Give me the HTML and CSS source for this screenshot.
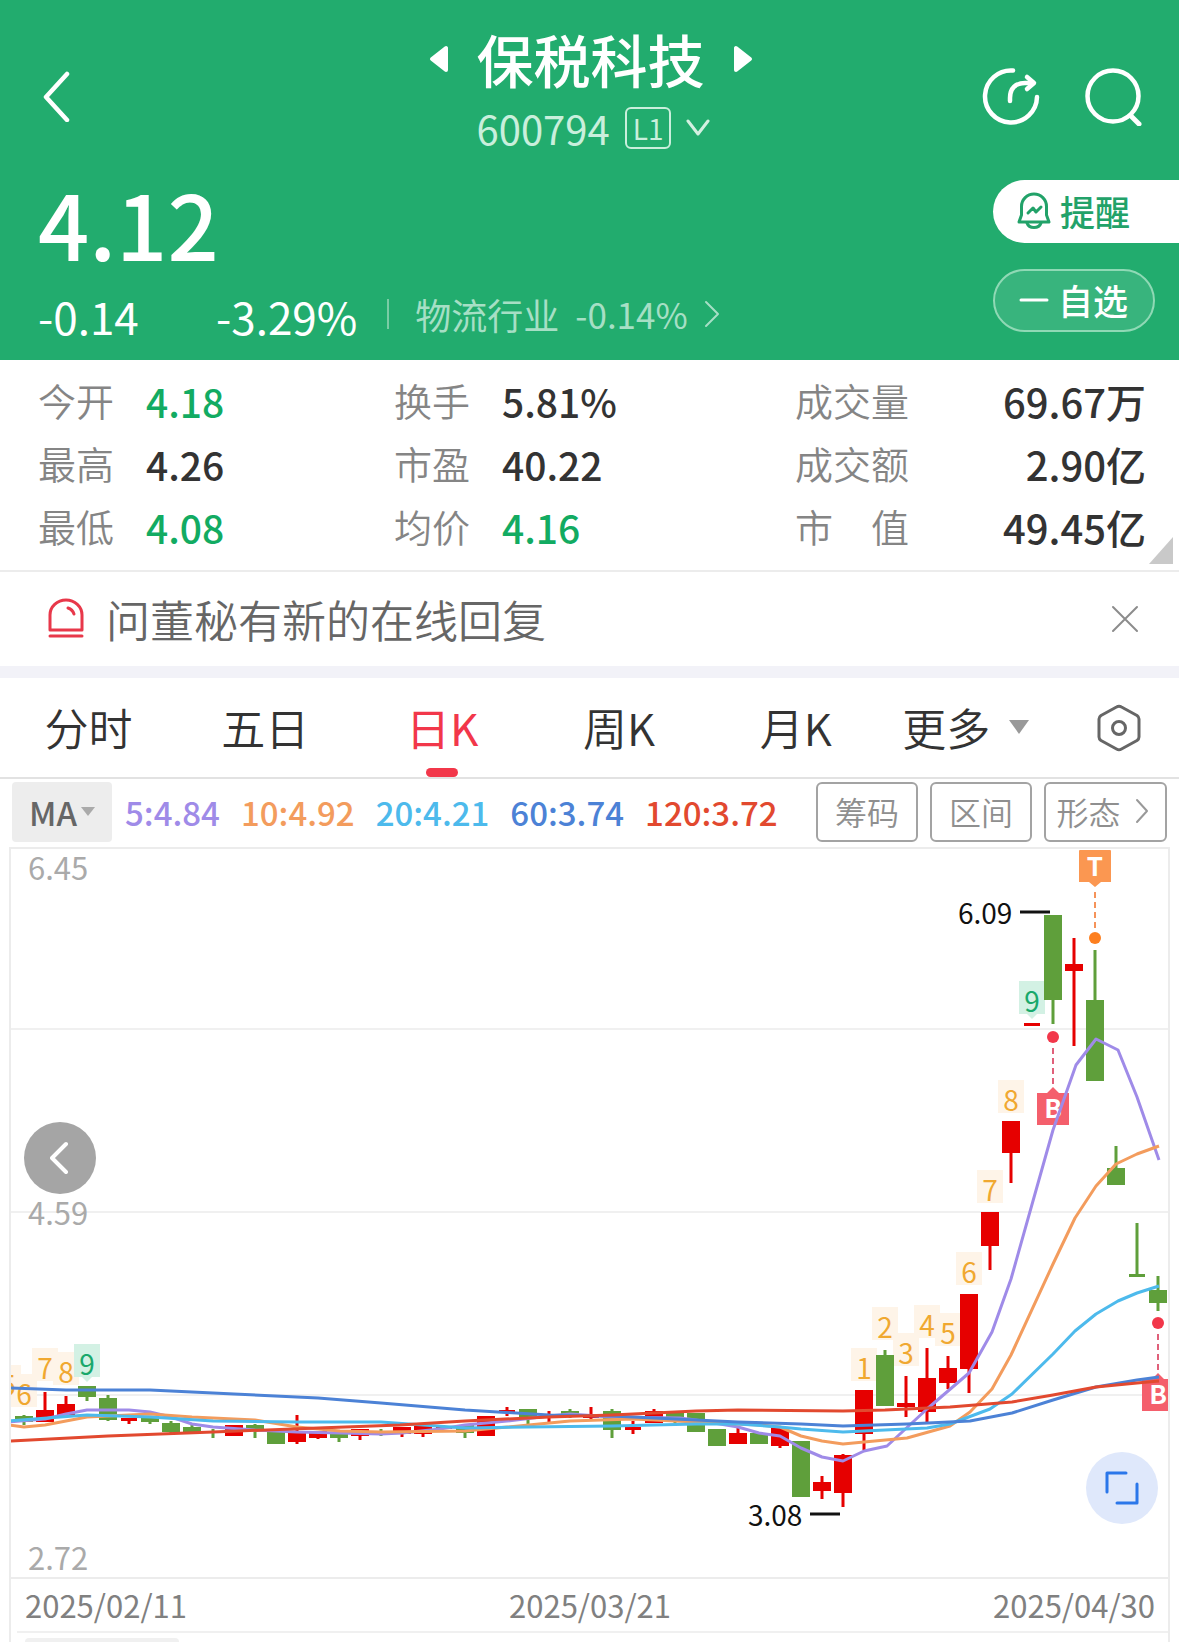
FILE: index.html
```html
<!DOCTYPE html>
<html lang="zh-CN">
<head>
  <meta charset="UTF-8">
  <meta name="viewport" content="width=device-width, initial-scale=1">
  <title>保税科技 600794</title>
  <link rel="stylesheet" href="styles.css">
</head>
<body>
  <header class="quote-header">
    <div class="top-bar">
      <button class="icon-btn back-btn" aria-label="返回">
        <svg width="30" height="52" viewBox="0 0 30 52"><path d="M25 4 4 27 25 50" fill="none" stroke="#fff" stroke-width="4.500" stroke-linecap="round" stroke-linejoin="round"/></svg>
      </button>
      <div class="stock">
        <div class="stock-name">
          <button class="icon-btn" aria-label="上一只">
            <svg width="20" height="28" viewBox="0 0 20 28"><path d="M17 4v22L3 15z" fill="#fff" stroke="#fff" stroke-width="4" stroke-linejoin="round"/></svg>
          </button>
          <h1>保税科技</h1>
          <button class="icon-btn" aria-label="下一只">
            <svg width="20" height="28" viewBox="0 0 20 28"><path d="M3 4v22l14-11z" fill="#fff" stroke="#fff" stroke-width="4" stroke-linejoin="round"/></svg>
          </button>
        </div>
        <div class="stock-code">
          <span>600794</span>
          <span class="level">L1</span>
          <svg width="24" height="18" viewBox="0 0 24 18"><path d="m2 2 10 13L22 2" fill="none" stroke="#d3f0e1" stroke-width="3" stroke-linecap="round" stroke-linejoin="round"/></svg>
        </div>
      </div>
      <div class="top-actions">
        <button class="icon-btn" aria-label="分享">
          <svg width="58" height="60" viewBox="0 0 58 60"><g fill="none" stroke="#fff" stroke-width="4.500" stroke-linecap="round" stroke-linejoin="round"><path d="M31 4.500A26 26 0 1 0 55 31"/><path d="M28 35v-3c0-10 6-15 15-15h7"/><path d="m45 11 7 6-7 6"/></g></svg>
        </button>
        <button class="icon-btn" aria-label="搜索">
          <svg width="58" height="60" viewBox="0 0 58 60"><g fill="none" stroke="#fff" stroke-width="4.500" stroke-linecap="round"><circle cx="28" cy="30" r="25.500"/><path d="m46 50 8 8" stroke-width="5"/></g></svg>
        </button>
      </div>
    </div>

    <div class="quote">
      <div class="quote-main">
        <div class="price">4.12</div>
        <div class="change">
          <span class="change-value">-0.14</span>
          <span>-3.29%</span>
          <a class="sector" href="#sector">
            物流行业
            <span>-0.14%</span>
            <svg width="16" height="28" viewBox="0 0 16 28"><path d="m2 2 12 12L2 26" fill="none" stroke="#a6dfc5" stroke-width="2" stroke-linecap="round" stroke-linejoin="round"/></svg>
          </a>
        </div>
      </div>
      <div class="quote-actions">
        <button class="pill pill-alert">
          <svg width="34" height="38" viewBox="0 0 34 38"><g fill="none" stroke="#22a269" stroke-width="3" stroke-linecap="round" stroke-linejoin="round"><path d="M4.500 23V14.500a12.500 12.500 0 0 1 25 0V23l2.500 7H2z"/><path d="M10 31c2 6 12 6 14 0"/><path d="m11 21 5-5 3 4 5-5"/></g></svg>
          提醒
        </button>
        <button class="pill pill-watch">
          <svg width="30" height="36" viewBox="0 0 30 36"><path d="M2 18h26" stroke="#fff" stroke-width="3" stroke-linecap="round"/></svg>
          自选
        </button>
      </div>
    </div>
  </header>

  <main>
    <section class="stats">
      <dl>
        <div><dt>今开</dt><dd class="down">4.18</dd></div>
        <div><dt>最高</dt><dd>4.26</dd></div>
        <div><dt>最低</dt><dd class="down">4.08</dd></div>
        <div><dt>换手</dt><dd>5.81%</dd></div>
        <div><dt>市盈</dt><dd>40.22</dd></div>
        <div><dt>均价</dt><dd class="down">4.16</dd></div>
        <div class="wide"><dt>成交量</dt><dd>69.67万</dd></div>
        <div class="wide"><dt>成交额</dt><dd>2.90亿</dd></div>
        <div class="wide"><dt>市　值</dt><dd>49.45亿</dd></div>
      </dl>
      <svg class="corner" width="24" height="27" viewBox="0 0 24 27"><path d="M24 0v27H0z" fill="#c9c9c9"/></svg>
    </section>

    <section class="notice">
      <svg width="36" height="42" viewBox="0 0 36 42"><g fill="none" stroke="#e8384a" stroke-width="3" stroke-linecap="round" stroke-linejoin="round"><path d="M2 32V17a16 15 0 0 1 32 0v15z"/><path d="M2 38h32"/><path d="M20 10c3 1 5 3 6 6"/></g></svg>
      <a href="#replies">问董秘有新的在线回复</a>
      <button class="icon-btn" aria-label="关闭">
        <svg width="28" height="28" viewBox="0 0 28 28"><path d="m2 2 24 24M26 2 2 26" stroke="#8c8c8c" stroke-width="2" stroke-linecap="round"/></svg>
      </button>
    </section>

    <nav class="tabs">
      <button class="tab">分时</button>
      <button class="tab">五日</button>
      <button class="tab active">日K</button>
      <button class="tab">周K</button>
      <button class="tab">月K</button>
      <button class="tab-more">
        更多
        <svg width="22" height="16" viewBox="0 0 22 16"><path d="M1 1h20L11 15z" fill="#999"/></svg>
      </button>
      <button class="icon-btn tab-settings" aria-label="设置">
        <svg width="44" height="48" viewBox="0 0 44 48"><g fill="none" stroke="#666" stroke-width="3" stroke-linejoin="round"><path d="M19.500 3 4 11.500Q2 13 2 15v18q0 2 2 3.500L19.500 45q2.500 1.500 5 0L40 36.500q2-1.500 2-3.500V15q0-2-2-3.500L24.500 3q-2.500-1.500-5 0z"/><circle cx="22" cy="24" r="6.500"/></g></svg>
      </button>
    </nav>

    <div class="indicator-bar">
      <button class="indicator">
        MA
        <svg width="14" height="10" viewBox="0 0 14 10"><path d="M0 0h14L7 9z" fill="#aaa"/></svg>
      </button>
      <div class="ma-values">
        <span class="ma5">5:4.84</span>
        <span class="ma10">10:4.92</span>
        <span class="ma20">20:4.21</span>
        <span class="ma60">60:3.74</span>
        <span class="ma120">120:3.72</span>
      </div>
      <div class="tools">
        <button class="tool">筹码</button>
        <button class="tool">区间</button>
        <button class="tool tool-shape">
          形态
          <svg width="14" height="26" viewBox="0 0 14 26"><path d="m2 2 10 11L2 24" fill="none" stroke="#999" stroke-width="2" stroke-linecap="round" stroke-linejoin="round"/></svg>
        </button>
      </div>
    </div>

    <section class="chart">
      <div class="plot">
        <svg id="kline" viewBox="11 849 1157 728" role="img" aria-label="日K线图"></svg>
        <button class="float-btn prev-btn" aria-label="向左">
          <svg width="20" height="34" viewBox="0 0 20 34"><path d="M16 3 2 17l14 14" fill="none" stroke="#fff" stroke-width="4" stroke-linecap="round" stroke-linejoin="round"/></svg>
        </button>
        <button class="float-btn expand-btn" aria-label="全屏">
          <svg width="34" height="34" viewBox="0 0 34 34"><path d="M21 2H2v19M12 32h20V13" fill="none" stroke="#2b77ea" stroke-width="3" stroke-linecap="round" stroke-linejoin="round"/></svg>
        </button>
      </div>
      <div class="dates">
        <span>2025/02/11</span>
        <span>2025/03/21</span>
        <span>2025/04/30</span>
      </div>
      <div class="volume"><div class="volume-tag"></div></div>
    </section>
  </main>

  <script>
    const SVG_NS = 'http://www.w3.org/2000/svg';
    const kline = document.getElementById('kline');
    const START = 24, STEP = 21, BODY = 18;

    // direction, high, body top, body bottom, low
    const candles = [
      ['d', 1415, 1416, 1422, 1425], ['u', 1392, 1410, 1422, 1422], ['u', 1396, 1404, 1415, 1415],
      ['d', 1386, 1386, 1397, 1401], ['d', 1395, 1398, 1420, 1421], ['u', 1418, 1418, 1421, 1424],
      ['d', 1416, 1416, 1422, 1424], ['d', 1421, 1423, 1432, 1433], ['d', 1425, 1427, 1432, 1433],
      ['d', 1429, 1431, 1433, 1438], ['u', 1425, 1425, 1436, 1436], ['d', 1424, 1425, 1430, 1438],
      ['d', 1432, 1432, 1444, 1444], ['u', 1415, 1432, 1442, 1444], ['u', 1431, 1431, 1438, 1439],
      ['d', 1434, 1434, 1438, 1442], ['u', 1429, 1429, 1436, 1440], ['d', 1429, 1433, 1435, 1436],
      ['u', 1427, 1427, 1434, 1437], ['u', 1426, 1426, 1434, 1437], ['u', 1426, 1426, 1429, 1429],
      ['d', 1424, 1425, 1433, 1438], ['u', 1416, 1416, 1436, 1436], ['u', 1407, 1410, 1413, 1416],
      ['d', 1409, 1409, 1417, 1424], ['u', 1411, 1414, 1417, 1422], ['d', 1409, 1411, 1416, 1418],
      ['u', 1407, 1415, 1418, 1419], ['d', 1409, 1411, 1430, 1438], ['u', 1421, 1427, 1430, 1434],
      ['u', 1409, 1411, 1423, 1423], ['d', 1413, 1413, 1417, 1423], ['d', 1413, 1413, 1432, 1432],
      ['d', 1429, 1429, 1446, 1446], ['u', 1428, 1433, 1444, 1444], ['d', 1433, 1433, 1444, 1444],
      ['u', 1427, 1427, 1446, 1448], ['d', 1441, 1441, 1497, 1497], ['u', 1476, 1482, 1491, 1499],
      ['u', 1454, 1455, 1493, 1507], ['u', 1390, 1390, 1434, 1450], ['d', 1350, 1355, 1406, 1406],
      ['u', 1376, 1403, 1407, 1417], ['u', 1348, 1378, 1412, 1422], ['u', 1356, 1368, 1383, 1389],
      ['u', 1294, 1294, 1369, 1393], ['u', 1212, 1212, 1246, 1270], ['u', 1121, 1121, 1153, 1183],
      ['u', 1023, 1023, 1026, 1026], ['d', 915, 915, 1000, 1024], ['u', 938, 964, 971, 1046],
      ['d', 950, 1000, 1081, 1081], ['d', 1146, 1168, 1185, 1185], ['d', 1223, 1274, 1277, 1277],
      ['d', 1276, 1290, 1303, 1311]
    ];

    const averages = {
      ma5: '9,1422 45,1419 66,1414 87,1410 129,1410 150,1412 171,1417 192,1424 213,1427 255,1430 297,1432 340,1433 381,1434 402,1433 440,1429 465,1425 507,1421 549,1416 570,1414 612,1417 680,1418 696,1420 738,1427 759,1433 780,1436 801,1448 822,1457 843,1461 864,1451 887,1446 927,1409 969,1373 992,1332 1011,1279 1053,1130 1076,1065 1096,1039 1118,1050 1137,1097 1159,1160',
      ma10: '9,1425 24,1427 45,1425 87,1417 150,1414 192,1417 255,1420 297,1427 340,1431 381,1432 465,1431 507,1427 570,1421 633,1419 696,1422 759,1425 780,1427 801,1436 822,1441 843,1444 864,1442 907,1438 950,1426 970,1412 992,1389 1011,1355 1053,1264 1075,1218 1096,1186 1116,1164 1137,1154 1159,1146',
      ma20: '9,1421 87,1415 150,1417 213,1421 297,1422 381,1422 465,1428 528,1427 612,1426 696,1424 738,1424 780,1427 801,1429 843,1432 885,1430 927,1428 950,1424 990,1409 1012,1394 1053,1354 1075,1331 1096,1314 1118,1301 1137,1293 1159,1286',
      ma60: '9,1388 66,1390 150,1390 234,1394 318,1398 381,1403 465,1410 549,1415 612,1416 696,1420 738,1422 801,1424 843,1426 907,1424 970,1421 1012,1413 1053,1400 1096,1387 1137,1380 1159,1377',
      ma120: '9,1441 108,1436 213,1432 318,1428 400,1425 465,1421 549,1417 612,1415 696,1411 738,1410 843,1411 885,1410 950,1407 1012,1402 1053,1395 1096,1387 1137,1383 1159,1381'
    };

    // count label, x, baseline
    const counts = [
      ['5', 8, 1396], ['6', 24, 1405], ['7', 45, 1379], ['8', 66, 1383], ['9', 87, 1375],
      ['1', 864, 1379], ['2', 885, 1338], ['3', 906, 1364], ['4', 927, 1336], ['5', 948, 1344],
      ['6', 969, 1283], ['7', 990, 1201], ['8', 1011, 1111], ['9', 1032, 1012]
    ];

    function add(tag, attrs, text) {
      const el = document.createElementNS(SVG_NS, tag);
      for (const key in attrs) el.setAttribute(key, attrs[key]);
      if (text) el.textContent = text;
      kline.appendChild(el);
    }

    // --- Grid ---
    [1029, 1212, 1395].forEach(y => add('path', { d: `M9 ${y}h1160`, class: 'grid-line' }));
    add('text', { x: 28, y: 880, class: 'axis' }, '6.45');
    add('text', { x: 28, y: 1225, class: 'axis' }, '4.59');
    add('text', { x: 28, y: 1570, class: 'axis' }, '2.72');

    // --- Count labels ---
    counts.forEach(([n, x, y]) => {
      const cls = n === '9' ? 'nine-bg' : 'count-bg';
      add('rect', { x: x - 13, y: y - 31, width: 26, height: 33, class: cls });
      if (n === '9') add('path', { d: `M${x - 5} ${y + 2}h10l-5 5z`, class: cls });
    });
    counts.forEach(([n, x, y]) => {
      add('text', { x: x, y: y, class: n === '9' ? 'count nine' : 'count' }, n);
    });

    // --- Candles ---
    candles.forEach(([dir, high, top, bottom, low], i) => {
      const x = START + STEP * i;
      const w = bottom - top < 4 ? 16 : BODY;
      add('rect', { x: x - 1.5, y: high, width: 3, height: low - high, class: dir });
      add('rect', { x: x - w / 2, y: top, width: w, height: bottom - top, class: dir });
    });

    // --- High / low marks ---
    add('text', { x: 958, y: 924, class: 'extreme' }, '6.09');
    add('path', { d: 'M1020 912h30', class: 'extreme-line' });
    add('text', { x: 748, y: 1526, class: 'extreme' }, '3.08');
    add('path', { d: 'M810 1514h30', class: 'extreme-line' });

    // --- Trade marks ---
    add('path', { d: 'M1095 892v38', class: 'dash t-mark' });
    add('circle', { cx: 1095, cy: 938, r: 6, class: 't-dot' });
    add('path', { d: 'M1080 850h30a1 1 0 0 1 1 1v31h-10l-6 5-6-5h-10v-31a1 1 0 0 1 1-1z', class: 't-box' });
    add('text', { x: 1095, y: 876, class: 'mark' }, 'T');
    [[1053, 1037], [1158, 1323]].forEach(([x, y]) => {
      add('circle', { cx: x, cy: y, r: 6, class: 'b-dot' });
      add('path', { d: `M${x} ${y + 11}v38`, class: 'dash b-mark' });
      add('path', { d: `M${x - 16} ${y + 56}h10l6-6 6 6h10v32h-32z`, class: 'b-box' });
      add('text', { x: x, y: y + 81, class: 'mark' }, 'B');
    });

    // --- Moving averages ---
    ['ma5', 'ma10', 'ma20', 'ma60', 'ma120'].forEach(name => {
      add('polyline', { points: averages[name], class: 'ma-line ' + name });
    });
  </script>
</body>
</html>
```

FILE: styles.css
```css
:root {
  --green: #22ac6e;
  --down: #12ab62;
  --red: #f2374a;
  --text: #333;
  --muted: #858585;
  --line: #ececec;
}
/* Reset & Base Styles */
* { margin: 0; padding: 0; box-sizing: border-box; }
body {
  background: #fff;
  color: var(--text);
  font-family: "Noto Sans CJK SC", "Noto Sans", sans-serif;
  font-size: 33px;
}
button {
  border: none;
  background: none;
  color: inherit;
  font: inherit;
  cursor: pointer;
}
a { color: inherit; text-decoration: none; }
svg { display: block; flex: none; }
.icon-btn { display: flex; align-items: center; }

/* Header */
.quote-header {
  background: var(--green);
  color: #fff;
  padding: 26px 0 6px;
}
.top-bar {
  display: grid;
  grid-template-columns: 1fr auto 1fr;
  align-items: center;
  padding: 0 36px 0 38px;
}
.back-btn { padding-left: 4px; }
.stock-name {
  display: flex;
  align-items: center;
  justify-content: center;
  gap: 28px;
  line-height: 64px;
}
.stock-name h1 {
  font-size: 57px;
  font-weight: 500;
}
.stock-code {
  display: flex;
  align-items: center;
  justify-content: center;
  gap: 15px;
  padding-left: 6px;
  line-height: 76px;
  font-size: 40px;
  color: #c9efdc;
}
.level {
  border: 2px solid #c9efdc;
  border-radius: 6px;
  padding: 0 6px;
  font-size: 28px;
  line-height: 38px;
}
.top-actions {
  display: flex;
  justify-content: flex-end;
  gap: 45px;
}

.quote {
  display: flex;
  justify-content: space-between;
}
.quote-main { padding-left: 38px; }
.price {
  font-size: 90px;
  font-weight: 500;
  line-height: 112px;
}
.change {
  display: flex;
  align-items: flex-start;
  font-size: 44px;
  line-height: 76px;
}
.change-value { width: 178px; }
.sector {
  display: flex;
  align-items: center;
  gap: 16px;
  margin-left: 30px;
  font-size: 36px;
  line-height: 72px;
  color: #a6dfc5;
}
.sector span { font-size: 35px; }
.sector::before {
  content: "";
  width: 2px;
  height: 30px;
  margin-right: 10px;
  background: #7acca5;
}
.quote-actions {
  display: flex;
  flex-direction: column;
  gap: 26px;
  padding-top: 14px;
}
.pill {
  display: flex;
  align-items: center;
  gap: 9px;
  height: 63px;
  padding: 0 24px 2px;
  font-size: 35px;
  font-weight: 500;
}
.pill-alert {
  width: 186px;
  border-radius: 32px 0 0 32px;
  background: #fff;
  color: #22a269;
}
.pill-watch {
  width: 162px;
  border: 2px solid #8fd9b5;
  border-radius: 32px;
  background: #38b47d;
}

/* Stats */
.stats {
  position: relative;
  padding: 8px 33px 13px 38px;
  border-bottom: 2px solid var(--line);
}
.stats dl {
  display: grid;
  grid-template-columns: 356fr 401fr 351fr;
  grid-template-rows: repeat(3, 63px);
  grid-auto-flow: column;
}
.stats dl div {
  display: flex;
  line-height: 63px;
}
.stats dt {
  width: 108px;
  font-size: 38px;
  font-weight: 350;
  color: var(--muted);
}
.stats dd {
  padding-top: 2px;
  font-size: 39px;
  font-weight: 500;
}
.stats .wide { justify-content: space-between; }
.stats .wide dt { width: auto; }
.stats .wide dd { font-size: 40px; }
.stats .down { color: var(--down); }
.corner {
  position: absolute;
  right: 6px;
  bottom: 6px;
}

/* Notice */
.notice {
  display: flex;
  align-items: center;
  gap: 22px;
  height: 106px;
  padding: 0 40px 0 48px;
  border-bottom: 12px solid #f2f2f8;
  font-size: 44px;
  font-weight: 350;
  color: #666;
}
.notice a { flex: 1; }

/* Tabs */
.tabs {
  display: flex;
  align-items: stretch;
  height: 101px;
  border-bottom: 2px solid #e2e2e2;
  font-size: 44px;
  font-weight: 350;
}
.tab {
  position: relative;
  width: 15%;
  padding-bottom: 2px;
}
.tab.active {
  color: var(--red);
  font-weight: 400;
}
.tab.active::after {
  content: "";
  position: absolute;
  left: 50%;
  bottom: 0;
  width: 32px;
  height: 9px;
  margin-left: -16px;
  border-radius: 5px;
  background: var(--red);
}
.tab-more {
  display: flex;
  align-items: center;
  gap: 18px;
  margin-left: 18px;
  padding-bottom: 2px;
}
.tab-settings {
  margin-left: auto;
  padding-right: 38px;
}

/* Indicator bar */
.indicator-bar {
  display: flex;
  align-items: center;
  padding: 3px 12px 5px;
}
.indicator {
  display: flex;
  align-items: center;
  justify-content: center;
  gap: 4px;
  width: 100px;
  height: 60px;
  border-radius: 4px;
  background: #ededed;
  font-weight: 500;
  color: #666;
}
.ma-values {
  display: flex;
  gap: 21px;
  margin-left: 13px;
  font-weight: 500;
}
.ma5 { color: #9f8be8; stroke: #9f8be8; }
.ma10 { color: #f39c5d; stroke: #f39c5d; }
.ma20 { color: #4dbaec; stroke: #4dbaec; }
.ma60 { color: #4c82d6; stroke: #4c82d6; }
.ma120 { color: #e2492f; stroke: #e2492f; }
.tools {
  display: flex;
  gap: 12px;
  margin-left: auto;
}
.tool {
  width: 102px;
  height: 60px;
  padding-bottom: 2px;
  border: 2px solid #a3a3a3;
  border-radius: 6px;
  font-size: 32px;
  font-weight: 350;
  color: #8f8f8f;
}
.tool-shape {
  display: flex;
  align-items: center;
  justify-content: center;
  gap: 14px;
  width: 123px;
  padding-right: 6px;
}

/* Chart */
.chart {
  margin: 0 9px;
  border: 2px solid var(--line);
  border-bottom: none;
}
.plot { position: relative; }
#kline {
  width: 100%;
  overflow: visible;
  clip-path: inset(-10px 0);
}
.grid-line { stroke: #f0f0f0; stroke-width: 2; }
.axis { font-size: 31px; fill: #aaa; }
.u { fill: #e60000; }
.d { fill: #5f9f3b; }
.ma-line {
  fill: none;
  stroke-width: 3;
  stroke-linejoin: round;
}
.count {
  font-size: 28px;
  text-anchor: middle;
  fill: #f0a830;
}
.nine { fill: #1aa86b; }
.count-bg { fill: #fef4e8; }
.nine-bg { fill: #d3f1e4; }
.extreme { font-size: 28px; fill: #111; }
.extreme-line { stroke: #111; stroke-width: 3; }
.mark {
  font-size: 26px;
  font-weight: 700;
  text-anchor: middle;
  fill: #fff;
}
.dash { stroke-width: 2; stroke-dasharray: 6 4; }
.t-mark { stroke: #f5935a; }
.t-dot { fill: #fd7f1f; }
.t-box { fill: #fb9751; }
.b-mark { stroke: #e0607a; }
.b-dot { fill: #f2374a; }
.b-box { fill: #f45f6c; }

.float-btn {
  position: absolute;
  display: flex;
  align-items: center;
  justify-content: center;
  width: 72px;
  height: 72px;
  border-radius: 50%;
}
.prev-btn {
  left: 13px;
  top: 273px;
  background: #a5a5a5;
}
.expand-btn {
  right: 10px;
  bottom: 53px;
  background: #dfe8fb;
}

.dates {
  display: flex;
  justify-content: space-between;
  padding: 0 13px 0 14px;
  border-top: 2px solid var(--line);
  font-size: 31px;
  line-height: 52px;
  color: #808080;
}
.volume {
  margin-left: 6px;
  border-top: 2px solid #f0f0f0;
  padding: 5px 8px 0;
}
.volume-tag {
  width: 154px;
  height: 4px;
  border-radius: 4px 4px 0 0;
  background: #f0f0f0;
}
```
